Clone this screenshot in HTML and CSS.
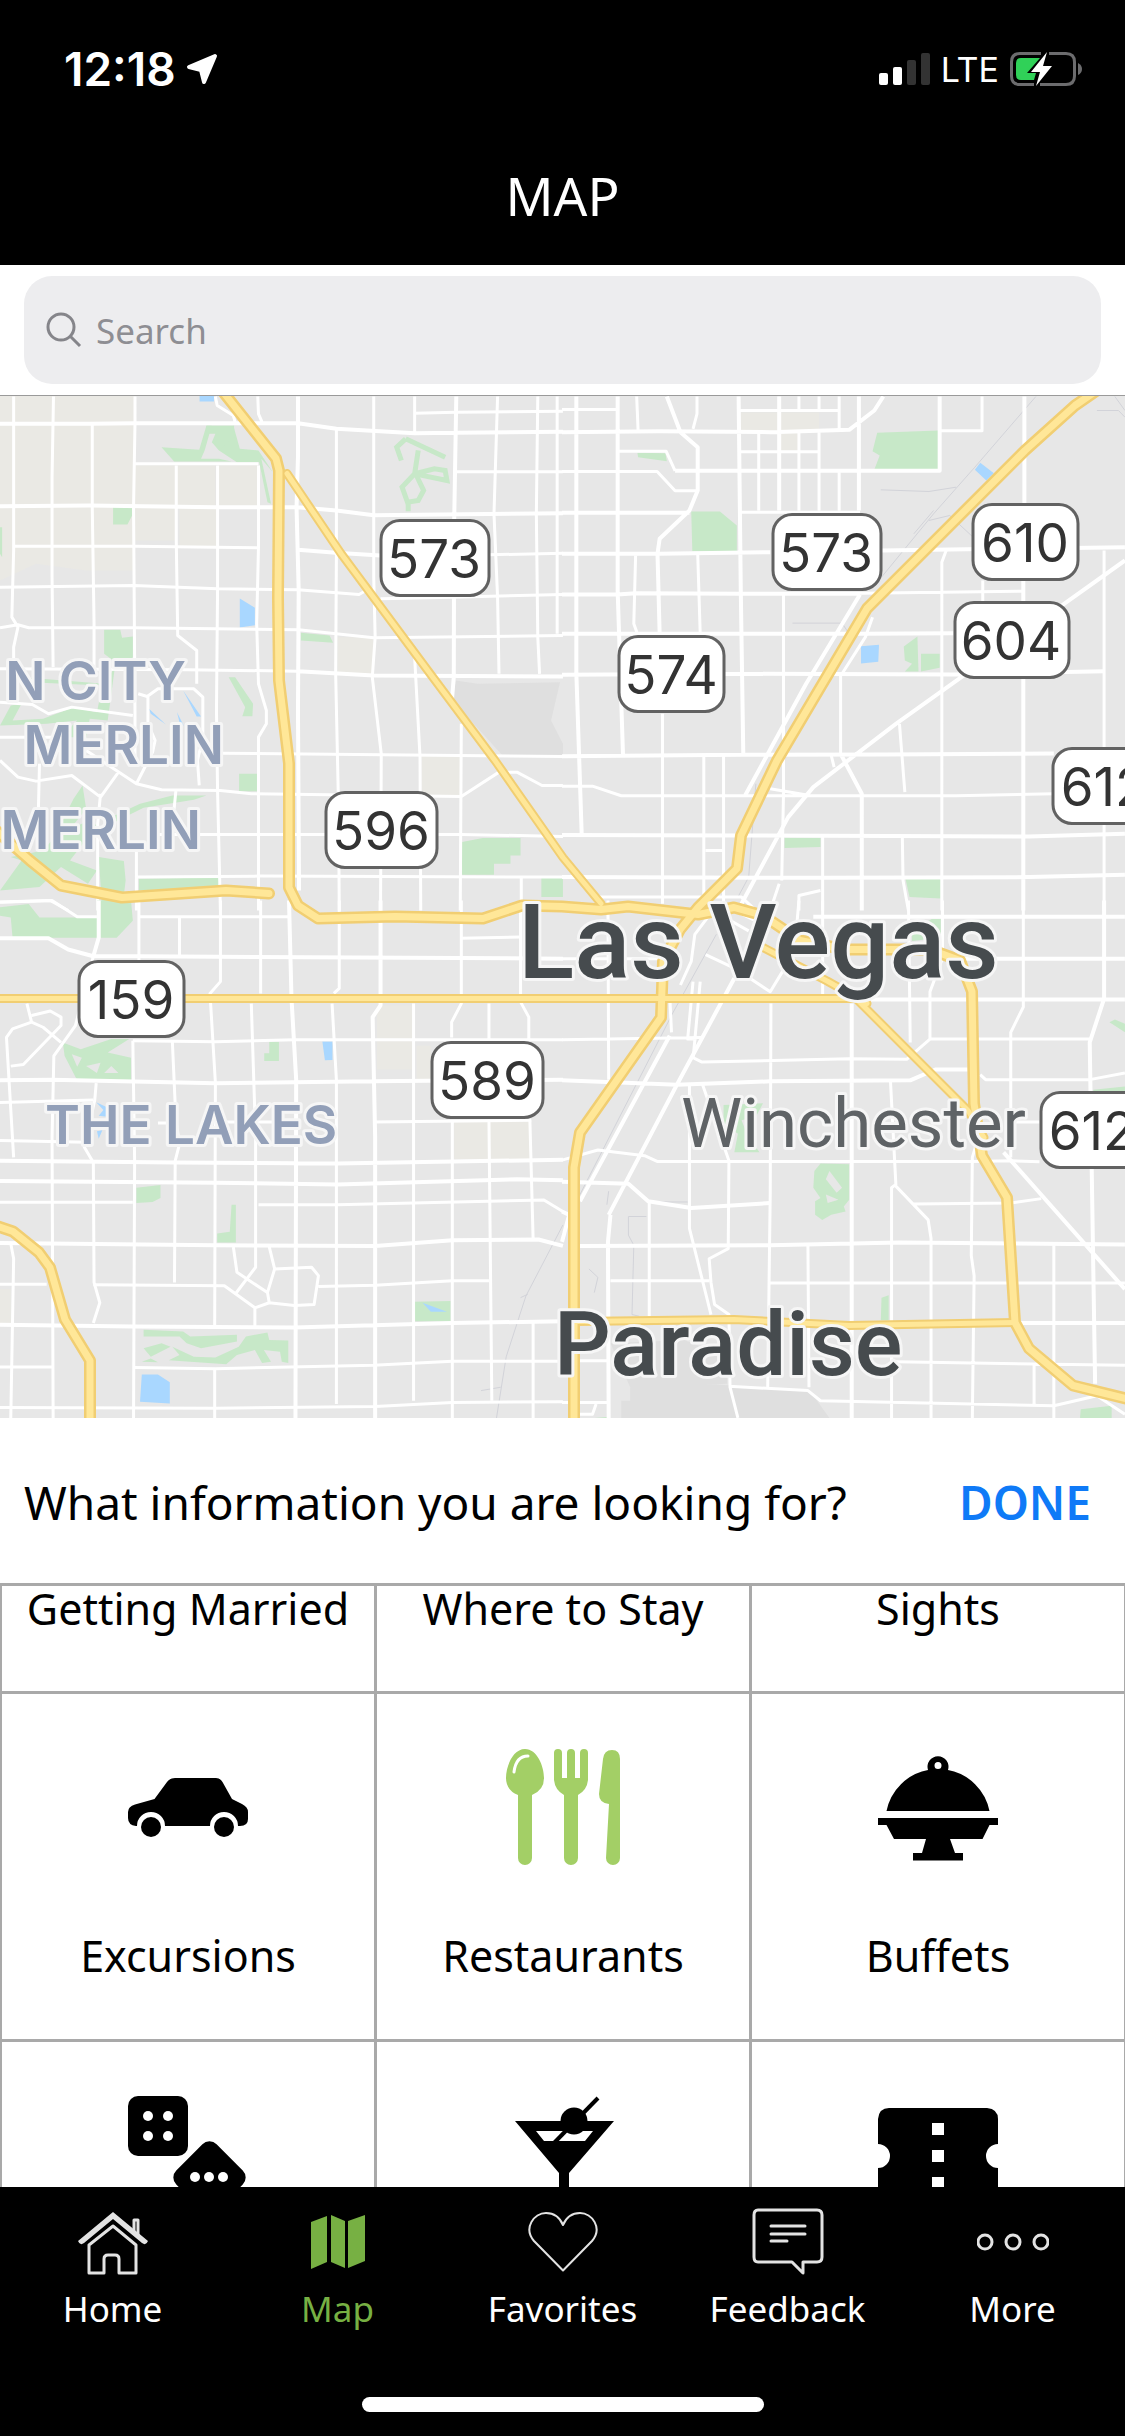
FILE: index.html
```html
<!DOCTYPE html>
<html lang="en">
<head>
    <meta charset="UTF-8">
    <meta name="viewport" content="width=device-width, initial-scale=1.0">
    <title>Map</title>
    <link rel="stylesheet" href="styles.css">
</head>
<body>
    <div class="app">
        <header class="header">
            <div class="status">
                <div class="status-group">
                    <span class="time">12:18</span>
                    <svg class="location" viewBox="0 0 32 32" aria-hidden="true">
                        <path d="M29 3L3 14 15 17 18 29Z"/>
                    </svg>
                </div>
                <div class="status-group status-right">
                    <svg class="signal" viewBox="0 0 52 34" aria-hidden="true">
                        <rect x="0" y="21" width="9" height="12" rx="2"/>
                        <rect x="14" y="15" width="9" height="18" rx="2"/>
                        <rect class="off" x="28" y="8" width="9" height="25" rx="2"/>
                        <rect class="off" x="42" y="1" width="9" height="32" rx="2"/>
                    </svg>
                    <span class="network">LTE</span>
                    <svg class="battery" viewBox="0 0 74 36" aria-hidden="true">
                        <path class="battery-shell" d="M32 2.500H11Q2.500 2.500 2.500 11V25Q2.500 33.500 11 33.500H25M40 2.500H57Q65.500 2.500 65.500 11V25Q65.500 33.500 57 33.500H31"/>
                        <path class="battery-nub" d="M69 12Q73 14 73 18Q73 22 69 24Z"/>
                        <path class="battery-level" d="M12 7H31L18 22H27L25 29H12Q7 29 7 24V12Q7 7 12 7Z"/>
                        <path class="battery-bolt" d="M38 1L22 21H31L27 35L43 15H34Z"/>
                    </svg>
                </div>
            </div>
            <h1>MAP</h1>
        </header>

        <div class="search-bar">
            <label class="search">
                <svg class="search-icon" viewBox="0 0 36 36" aria-hidden="true">
                    <circle cx="15" cy="15" r="13"/>
                    <path d="M24 24L34 34"/>
                </svg>
                <input type="search" placeholder="Search" aria-label="Search">
            </label>
        </div>

        <main class="map">
            <svg viewBox="0 0 1125 1023" preserveAspectRatio="xMidYMid slice">
                <!-- north west tile -->
                <g transform="matrix(.359 0 0 .3333 0 -5)">
                    <path class="sand" d="M0 0H376V540H240L100 520 0 570ZM376 225H600V350H376ZM376 350H490V450H376ZM606 225H720V350H606ZM940 740H1040V850H940ZM1175 1095H1285V1220H1175ZM500 350H606V470H500Z"/>
                    <path class="block" d="M1270 870L1330 880 1560 875 1535 990 1568 1060V1095H1400L1260 930Z"/>
                    <path class="park" d="M450 170L555 178 575 105H590L570 180 560 205H610L645 213H485ZM650 105L668 175 720 180 760 245 728 205 755 340 745 335 722 215H660L610 180ZM315 347H368V375L355 402H315ZM290 718H335L340 742 370 738V800L340 830 290 790ZM838 727L918 735 928 757 838 750ZM637 860H655L705 940 703 977H675L683 950ZM666 1150H716V1202H666ZM1287 1355L1345 1343H1450V1395H1422V1420H1376V1453H1287ZM1508 1460H1568V1520H1508ZM387 1465L560 1462H614V1490L387 1500ZM275 1400L345 1412 350 1470 340 1560H285ZM0 410H6V500L0 490ZM80 862L290 880 320 830 300 990 250 985 240 1040 170 1040 215 990 130 1000 0 1005 30 945 60 940 35 990 120 985 205 950 270 965 285 885 85 875ZM230 1185L240 1255 200 1310 170 1300 205 1225ZM290 1290L390 1240 480 1215H575L540 1228 400 1252 310 1300ZM160 1330L250 1290 270 1305 195 1410 270 1440 245 1480 170 1430 110 1490 0 1500 60 1410 30 1400 120 1380Z"/>
                    <path class="park-line" d="M1130 145L1105 170 1118 210M1130 145L1240 200M1165 180L1155 250 1245 270 1240 240 1210 235 1155 250 1120 290 1135 335 1165 330 1180 300 1160 255M1137 335V362"/>
                    <path class="park" d="M575 105H652V140L610 180 590 155 600 130H575Z"/>
                    <path class="water" d="M556 14H596V33H556ZM668 624L710 652V704L668 711ZM510 900L560 978H548ZM415 955L462 1002 420 970ZM493 965L512 1006 500 995Z"/>
                    <path class="road" d="M38 18V480L33 680 50 710 38 770V820M149 18L145 260V560L148 830M257 100V350L262 700V830M376 18V100L372 350 376 960V1100M491 225V450L495 735 548 780V880M606 225V600L603 960 606 1200 614 1560M720 225V470L715 700 720 880 742 960V1000L720 1040V1560M600 18L605 45 650 75 655 95M718 18L720 70 730 95M937 115V500L935 850 943 1250 945 1560M1041 18V560L1045 740 1037 860 1062 1090 1060 1560M1155 18V125M1155 800L1170 1100 1172 1560M1285 1000L1282 1560M1386 18L1376 370 1386 620 1390 850M1498 18L1494 370 1498 740 1503 850M1552 18V730"/>
                    <path class="road" d="M1155 68L1270 65 1568 62M376 220H720M1271 244H1568M38 467H376L720 472M1360 493L1568 488M0 590L372 585 606 595 830 598 1000 612 1020 600M1060 625L1260 620 1568 612M0 712L50 703 80 712H370L832 718 1041 742 1568 735M0 835L520 838 830 842M0 935L90 942 135 970 200 950 370 975M620 1088L1568 1098M0 1110L50 1160 100 1172 200 1155 280 1220 330 1145M240 1080L380 1180 450 1198 614 1200 700 1210 1285 1218 1390 1145H1440L1510 1185H1568M440 1332H1285L1568 1338M380 1460L720 1457 1568 1460M280 1210L272 1300V1560M380 1380V1560M385 910L410 918 440 895H540L565 920V1040L550 1110 555 1185M412 918V1000L432 1050 425 1085 380 1180M110 1120L107 1255M0 1040H150M490 1200L485 1255M0 1535L140 1530 190 1560M1452 1460V1560"/>
                    <path class="road major" d="M0 100H250L376 98H830L937 115 1155 128 1270 127 1568 124M830 18V200L826 350 832 600 830 960 833 1500M1271 18L1265 400 1264 860 1258 940M0 347L250 345 600 350H830L937 360 1041 374 1568 368M830 478L935 487 1060 495M830 842L1041 855 1568 858"/>
                </g>

                <!-- north east tile -->
                <g transform="matrix(.359 0 0 .3333 562 -5)">
                    <path class="sand" d="M498 66H716V120H498ZM610 125H660V180H610Z"/>
                    <path class="park" d="M878 127L1048 120V237H870L885 195 865 182ZM360 363H440L487 405V482H363ZM210 187L288 188 292 212 212 200ZM620 1342H720V1370L620 1373ZM957 1466H1055V1524L968 1520ZM952 768L990 738 993 843H955L975 820 955 810ZM1000 790H1052V832L1000 843Z"/>
                    <path class="water" d="M1165 217L1203 248 1182 270 1150 238ZM833 767L883 763 881 814 833 819Z"/>
                    <path class="rail" d="M1320 18L1150 230 1035 370 890 560M888 298L1022 303 1098 290M1022 390L1080 375 1145 440M642 698H780L800 730M1490 60H1550L1568 80M1035 360L980 430M1540 18L1568 60M540 1180L520 1460 490 1520"/>
                    <path class="road" d="M208 18L212 120M376 18V70L365 115M660 18V60M660 125V360M716 18V60M716 125V360M548 125V360M772 18V120M772 245V360M492 60H772M492 184H716M0 57H155M155 182H290L315 241M0 243H265L315 301H378M498 365H830M1170 18V121H1052M1070 480L1058 515V1560M830 608L1058 605 1285 602M1172 570V640M205 495L200 700 210 730M378 490L385 730M1510 480V1560M865 680L845 740 780 850M617 612V1210L612 1470M776 850V1090M940 1000L955 1205M280 970V1540M395 1095V1540M450 1095V1540M0 1187H85L165 1216H1100L1370 1210M400 1380H450M726 1340V1560M948 1340L950 1470 965 1560M750 1095L758 1130M90 1520H500L540 1560M660 1560V1515L720 1500M580 1195L690 1215M605 1480L580 1560"/>
                    <path class="road major" d="M40 18V850L55 1335M155 18V600L170 1095M292 18L330 125 378 170V300L355 360 272 445 266 490 272 730M492 18L498 600 505 1090M605 18V360M827 18V360M0 125L270 122 580 125 800 118 870 60 895 18M315 241H1052V18M0 367H355M0 490H270L580 485M890 480L1568 470M1288 18V340M1285 570V1560M0 612H155L205 608 500 610H830M0 730H840L1090 728M0 853L500 850 1090 852 1510 842M1568 510L930 1000 700 1190 630 1280 500 1540M830 612L680 880 510 1215M776 1090L835 1210V1560M0 1097L500 1093 900 1092 1370 1089M0 1334L500 1335 1300 1338 1568 1330M0 1460L720 1462 1300 1460 1568 1453"/>
                </g>

                <!-- south west tile -->
                <g transform="matrix(.359 0 0 .338 0 505)">
                    <path class="sand" d="M1050 310H1150V500H1050ZM1265 655H1476V765H1265ZM0 1150H30V1250H0ZM1160 430H1200V530H1160Z"/>
                    <path class="park" d="M0 20L80 10 110 50H270V0H365L370 60 325 110H35L30 50 0 45ZM175 420L225 440 310 410H360L300 450 365 465V532H215L180 460ZM750 418H777V475H736V452H750ZM380 850L447 842V880L425 892 380 895ZM645 900H657V1012H605V985L640 980ZM1150 1187L1255 1185V1245H1150ZM400 1270L510 1275 530 1290 660 1285V1305L560 1325 520 1310 500 1290H400ZM400 1325L450 1310 475 1320 420 1350ZM470 1360L500 1345 480 1320 540 1350 600 1352 665 1320 685 1290 745 1278 750 1300 803 1302 803 1368 785 1365 780 1335 735 1330 755 1365 730 1368 710 1330 660 1345 630 1372ZM395 1365L420 1355 440 1366Z"/>
                    <path class="land" d="M200 455L228 465 215 492ZM240 490L280 480 270 510ZM310 490L330 510H290Z"/>
                    <path class="water" d="M898 417H926V472L905 473ZM268 597L298 612V640L275 637 288 620ZM270 683L285 680 275 705ZM1177 1190L1245 1217H1200ZM395 1402H440L473 1425V1488L390 1483Z"/>
                    <path class="rail" d="M1568 960L1465 1170 1410 1350 1383 1531M1450 1175L1470 1165M1340 1450L1395 1440"/>
                    <path class="road" d="M387 0V180M500 48V170M614 0V240L585 275 600 540 598 1260M726 0V275M945 0V260L930 275M925 305L937 530V1490M1152 305V1480M1285 0V305L1258 360V405M1260 650V1531M1362 305V410M1362 650L1370 1480M1450 0V300L1473 345V415M1476 650L1485 1000M1485 1245V1531M700 305L712 700V1085L655 1165M480 415L490 650 500 720 488 770 486 1130M370 415L375 770 372 1531M260 165L210 370 150 460 145 700 148 1531M75 305L88 360 35 380 18 405 38 760M88 340L140 327 170 345V370L65 485 30 490M88 360L120 375 170 420M268 540L264 590 235 730 260 775 262 1130 278 1190 260 1250M30 1015L38 1060 30 1531M598 1385V1531"/>
                    <path class="road" d="M387 48H805M1285 112L1450 108M370 415L600 418 820 412H1568M0 598L260 590M0 710L240 715M440 658H490M600 655H820M1040 655L1480 650M0 893H370M720 900H940L1515 886 1568 920M0 1135H130M260 1137L625 1140 710 1205 750 1190 820 1198 875 1195 887 1110 868 1085 765 1090 745 1160 750 1190M750 1025L765 1090M650 1025L660 1100 745 1160M887 1142L1045 1138 1260 1125H1362M710 1205V1260M0 1380H148M375 1382L600 1385 1040 1375 1260 1363H1568M0 1500L600 1502 1045 1497 1260 1485 1568 1483M0 5L145 0 215 48H270"/>
                    <path class="road major" d="M275 0V110L260 165M805 0L812 290 825 530 823 1531M1060 0V310L1038 345 1045 700V1531M0 112H135L190 145 260 165H387L1568 172M0 532L145 530 600 541 1040 535 1568 530M0 770L490 775 940 778 1568 767M0 830L600 835 940 840 1440 825 1568 828M0 1013L600 1020 1045 1022 1260 1005 1500 1003 1568 1022M0 1255L370 1260 820 1263 1260 1250 1568 1245"/>
                </g>

                <!-- south east tile -->
                <g transform="matrix(.359 0 0 .338 562 505)">
                    <path class="block" d="M190 1400L400 1430 690 1450 745 1531H165V1480H190ZM135 1310L340 1300 460 1350V1430L190 1440Z"/>
                    <path class="park" d="M1030 55H1055V110L975 120V90ZM1525 360L1540 352 1568 365V390ZM1480 560L1568 550V565H1480ZM450 605L560 600 540 640 500 650 515 690 550 745H480L490 690 450 660ZM720 778L800 780V885L785 905 790 920 750 930 725 945 705 930V890L720 880 700 850 703 800ZM890 1175L910 1168V1242H888ZM1445 1505L1531 1495V1531H1443ZM90 1528H125V1531Z"/>
                    <path class="land" d="M745 800L780 850 765 865 735 825ZM735 870L770 885 740 895Z"/>
                    <path class="rail" d="M430 100L310 330 50 870 0 990M185 935H235M185 935V990L200 1020 195 1225 215 1230M130 860L125 900M75 1090L100 1115 90 1160M260 892H350"/>
                    <path class="road" d="M128 0L130 530M660 0L655 60M726 0V280M965 0L970 420M1060 0V170L1025 270V410M1285 0V315L1250 390V760M582 305L580 870 573 1440M465 770L463 1030 410 1060 415 1130 425 1195 465 1225 468 1440 490 1531M355 540V970L415 1225M390 540L465 770M243 890V1230M685 1020L688 1440M915 535L930 840 918 850V1531M930 845L1020 945 1028 1000V1531M1160 700L1143 760 1140 1050 1148 1110 1143 1531M1370 1020V1531M1315 1370V1490M0 172H280M0 412L390 405M1165 515L1180 530H1470L1568 510M1470 410H1025L960 470 800 468 390 478 365 465M0 768L100 738 230 755 265 772H1140L1250 770 1330 773M980 898L1250 895 1335 882M135 1125H410M580 1132H1568M930 1365L1568 1375M50 1362H130M465 1437L685 1450 720 1480 1370 1495 1490 1465 1568 1520M0 1485H130M95 1490L85 1520H50M300 280L305 390M365 240L350 410H375M385 240L365 470M420 30L370 100 360 180 330 250M400 160L480 200 580 270 620 200M1250 655H1330M480 30L540 60 530 100M470 60L520 90"/>
                    <path class="road major" d="M1510 0V290L1470 420 1475 760 1485 1430M807 305V1531M135 930L128 1010 130 1531M700 48H1568M1040 172H1568M0 532L320 545 580 535 970 532 1040 500H1130M850 293H1568M0 832L185 838 240 890 360 910 580 895M50 1022L580 1020 940 1012 1568 1018M1265 1250H1568M1230 745L1568 1150M480 230L320 545 130 930M300 400L50 890M0 920L20 930 0 1010"/>
                </g>

                <!-- highways: casing first, then fill -->
                <g class="casing">
                    <path class="thin" d="M287 78L341 158 433 282 495 365 563 462 601 508M0 603H856L968 715 984 742M763 552L828 586 867 608M576 926L734 924 849 930 1015 927"/>
                    <path d="M218-10L276 63 279 75 278 202 279 285 289 368V492L298 510 318 523 395 521 483 523 522 510 562 511 601 514 628 511 698 519 734 512 763 520 800 545 845 554H930L960 565 972 596 974 708 982 760 1007 802 1015 927 1029 953 1073 990 1130 1004"/>
                    <path d="M1104-10L1075 10 1025 55 867 213 777 365 741 440 737 473 698 512 680 534 663 566 661 622 580 737 574 772V1030M-5 434L30 465 61 490 122 502 226 495 269 498M-5 830L13 836 39 857 50 872 65 924 90 965V1030"/>
                </g>
                <g class="highway">
                    <path class="thin" d="M287 78L341 158 433 282 495 365 563 462 601 508M0 603H856L968 715 984 742M763 552L828 586 867 608M576 926L734 924 849 930 1015 927"/>
                    <path d="M218-10L276 63 279 75 278 202 279 285 289 368V492L298 510 318 523 395 521 483 523 522 510 562 511 601 514 628 511 698 519 734 512 763 520 800 545 845 554H930L960 565 972 596 974 708 982 760 1007 802 1015 927 1029 953 1073 990 1130 1004"/>
                    <path d="M1104-10L1075 10 1025 55 867 213 777 365 741 440 737 473 698 512 680 534 663 566 661 622 580 737 574 772V1030M-5 434L30 465 61 490 122 502 226 495 269 498M-5 830L13 836 39 857 50 872 65 924 90 965V1030"/>
                </g>

                <g class="district">
                    <text x="186" y="304" text-anchor="end">N CITY</text>
                    <text x="224" y="368" text-anchor="end">MERLIN</text>
                    <text x="201" y="453" text-anchor="end">MERLIN</text>
                    <text x="45" y="748">THE LAKES</text>
                </g>
                <text class="town" x="681" y="751">Winchester</text>
                <text class="city" x="518" y="582">Las Vegas</text>
                <text class="city paradise" x="554" y="979">Paradise</text>

                <g class="shield">
                    <rect x="381" y="125" width="108" height="75" rx="19"/><text x="434" y="182">573</text>
                    <rect x="773" y="119" width="108" height="75" rx="19"/><text x="826" y="176">573</text>
                    <rect x="973" y="109" width="105" height="75" rx="19"/><text x="1025" y="166">610</text>
                    <rect x="955" y="207" width="114" height="75" rx="19"/><text x="1011" y="264">604</text>
                    <rect x="619" y="241" width="105" height="75" rx="19"/><text x="671" y="298">574</text>
                    <rect x="326" y="397" width="111" height="75" rx="19"/><text x="381" y="454">596</text>
                    <rect x="1053" y="353" width="108" height="75" rx="19"/><text x="1104" y="410">612</text>
                    <rect x="79" y="566" width="105" height="75" rx="19"/><text x="131" y="623">159</text>
                    <rect x="432" y="647" width="111" height="75" rx="19"/><text x="487" y="704">589</text>
                    <rect x="1041" y="697" width="108" height="75" rx="19"/><text x="1092" y="754">612</text>
                </g>
            </svg>
        </main>

        <section class="panel">
            <div class="panel-head">
                <h2>What information you are looking for?</h2>
                <button class="done" type="button">DONE</button>
            </div>
            <div class="grid">
                <button class="cell cell-cut" type="button">Getting Married</button>
                <button class="cell cell-cut" type="button">Where to Stay</button>
                <button class="cell cell-cut" type="button">Sights</button>

                <button class="cell" type="button">
                    <svg viewBox="0 0 120 120" aria-hidden="true">
                        <path d="M7 56.500L26.500 51 39 34Q42 30 47 30H88Q92 30 94.500 34L104 51 114 56Q120 59 120 64V71Q120 78 112 78H110A14 14 0 0 0 82 78H37A14 14 0 0 0 9 78H8Q0 77 0 70V64Q0 58.500 7 56.500Z"/>
                        <circle cx="23" cy="79" r="10"/>
                        <circle cx="96" cy="79" r="10"/>
                    </svg>
                    Excursions
                </button>
                <button class="cell" type="button">
                    <svg class="selected" viewBox="0 0 120 120" aria-hidden="true">
                        <path d="M22 1C34 1 41 18 41 30Q41 42 29 47V110A7 7 0 0 1 15 110V47Q3 42 3 30C3 18 10 1 22 1Z"/>
                        <path d="M51 5A4 4 0 0 1 59 5V30H64V5A4 4 0 0 1 72 5V30H77V5A4 4 0 0 1 85 5V32Q84 42 75 47V110A7 7 0 0 1 61 110V47Q52 42 51 32Z"/>
                        <path d="M100 11Q101 2 109 2Q117 2 117 11V110A7 7 0 0 1 103 110L106 56Q96 55 96 46Z"/>
                        <path class="shine" d="M11 24Q13 8 25 8"/>
                    </svg>
                    Restaurants
                </button>
                <button class="cell" type="button">
                    <svg viewBox="0 0 120 120" aria-hidden="true">
                        <path fill-rule="evenodd" d="M8.500 63A52 52 0 0 1 50 22A10.500 10.500 0 1 1 70 22A52 52 0 0 1 111.500 63ZM60 14A3.500 3.500 0 1 0 60 21A3.500 3.500 0 1 0 60 14Z"/>
                        <path d="M0 70H120V77H111.500L104.500 91H72L77 105H85V112.500H35V105H44L48 91H16L8.500 77H0Z"/>
                    </svg>
                    Buffets
                </button>

                <button class="cell" type="button" aria-label="Casinos">
                    <svg viewBox="0 0 120 120" aria-hidden="true">
                        <rect width="60" height="60" rx="10"/>
                        <rect x="53" y="53" width="57" height="57" rx="10" transform="rotate(45 81.500 81.500)"/>
                        <g class="dots">
                            <circle cx="20" cy="20" r="5"/><circle cx="40" cy="20" r="5"/>
                            <circle cx="20" cy="40" r="5"/><circle cx="40" cy="40" r="5"/>
                            <circle cx="67" cy="81" r="5"/><circle cx="81" cy="81" r="5"/><circle cx="95" cy="81" r="5"/>
                        </g>
                    </svg>
                </button>
                <button class="cell" type="button" aria-label="Nightlife">
                    <svg viewBox="0 0 120 120" aria-hidden="true">
                        <path fill-rule="evenodd" d="M12 25H111L66 77V120H56V77ZM33 35L41 45H82L90 35Z"/>
                        <circle cx="71" cy="25" r="13.500"/>
                        <path class="stick" d="M95 2L50 48"/>
                    </svg>
                </button>
                <button class="cell" type="button" aria-label="Shows">
                    <svg viewBox="0 0 120 120" aria-hidden="true">
                        <path d="M11 12H109Q120 13 120 23V48A12 12 0 0 0 120 72V108H0V72A12 12 0 0 0 0 48V23Q1 12 11 12Z"/>
                        <path class="dots" d="M54 27H66V39H54ZM54 54H66V66H54ZM54 81H66V93H54Z"/>
                    </svg>
                </button>
            </div>
        </section>

        <nav class="tabs">
            <div class="tab-list">
                <a class="tab" href="#">
                    <svg viewBox="0 0 72 72" aria-hidden="true">
                        <path class="solid" d="M36 5L71 34Q69 39 65 36L36 12 7 36Q3 39 1 34Z"/>
                        <path class="line" d="M36 19L12 38V66H27V52Q27 48 31 48H38Q42 48 42 52V66H59V38ZM57 24V13H61V28"/>
                    </svg>
                    Home
                </a>
                <a class="tab active" href="#">
                    <svg viewBox="0 0 72 72" aria-hidden="true">
                        <path class="solid" d="M9 15L25 9V55L9 62ZM29 8L43 14V61L29 55ZM46 14L63 8V54L46 61Z"/>
                    </svg>
                    Map
                </a>
                <a class="tab" href="#">
                    <svg viewBox="0 0 72 72" aria-hidden="true">
                        <path class="line hair" d="M36 63.500L7 34C-4 21 7 6 19 6Q31 6 36 18Q41 6 53 6C65 6 76 21 65 34Z"/>
                    </svg>
                    Favorites
                </a>
                <a class="tab" href="#">
                    <svg viewBox="0 0 72 72" aria-hidden="true">
                        <path class="line" d="M6 3H65Q70 3 70 8V50Q70 55 65 55H51V66L40 55H6Q2 55 2 50V8Q2 3 6 3ZM19 19H53M19 27H53M19 34H35"/>
                    </svg>
                    Feedback
                </a>
                <a class="tab" href="#">
                    <svg viewBox="0 0 72 72" aria-hidden="true">
                        <g class="line"><circle cx="8" cy="35" r="7"/><circle cx="36" cy="35" r="7"/><circle cx="64" cy="35" r="7"/></g>
                    </svg>
                    More
                </a>
            </div>
            <div class="home-indicator"></div>
        </nav>
    </div>
</body>
</html>
```
FILE: styles.css
```css
* {
    box-sizing: border-box;
    margin: 0;
    padding: 0;
}
body {
    font-family: 'Noto Sans', 'Open Sans', sans-serif;
    background-color: #ffffff;
    color: #000000;
}
button, input {
    font: inherit;
    color: inherit;
    border: none;
    background: none;
}
svg {
    display: block;
    flex: none;
}
.app {
    display: flex;
    flex-direction: column;
    height: 100vh;
}

/* header */
.header {
    background-color: #000000;
    color: #ffffff;
    height: 265px;
}
.status {
    display: flex;
    justify-content: space-between;
    align-items: center;
    height: 138px;
    padding: 0 42px 0 64px;
    font-family: Inter, sans-serif;
}
.status-group {
    display: flex;
    align-items: center;
    gap: 10px;
}
.time {
    font-size: 46px;
    font-weight: 600;
}
.location {
    width: 32px;
    height: 32px;
    fill: #ffffff;
    stroke: #ffffff;
    stroke-width: 4;
    stroke-linejoin: round;
}
.signal {
    width: 52px;
    height: 34px;
    fill: #ffffff;
}
.signal .off {
    fill: #333333;
}
.network {
    font-size: 34px;
    font-weight: 400;
}
.battery {
    width: 74px;
    height: 36px;
}
.battery-shell {
    fill: none;
    stroke: #6c6c6e;
    stroke-width: 3;
}
.battery-nub {
    fill: #6c6c6e;
}
.battery-level {
    fill: #30d158;
}
.battery-bolt {
    fill: #ffffff;
}
.header h1 {
    font-size: 53px;
    font-weight: 400;
    line-height: 116px;
    text-align: center;
}

/* search */
.search-bar {
    padding: 11px 24px;
    border-bottom: 1px solid #9a9a9a;
}
.search {
    display: flex;
    align-items: center;
    gap: 14px;
    height: 108px;
    padding: 0 22px;
    border-radius: 28px;
    background-color: #ededef;
}
.search-icon {
    width: 36px;
    height: 36px;
    fill: none;
    stroke: #85858a;
    stroke-width: 3;
}
.search input {
    flex: 1;
    min-width: 0;
    font-size: 35px;
    outline: none;
    appearance: none;
}
.search input::placeholder {
    color: #8e8e93;
    opacity: 1;
}

/* map */
.map {
    flex: 1;
    min-height: 0;
    background-color: #e7e7e7;
    font-family: Inter, sans-serif;
}
.map svg {
    width: 100%;
    height: 100%;
}
.map path {
    vector-effect: non-scaling-stroke;
}
.sand { fill: #eae9e4; }
.block { fill: #dfdfdf; }
.land { fill: #e7e7e7; }
.park { fill: #c7e8c8; }
.park-line {
    fill: none;
    stroke: #c7e8c8;
    stroke-width: 5;
}
.water { fill: #a9d7ff; }
.rail {
    fill: none;
    stroke: #d2d3d9;
    stroke-width: 1;
}
.road {
    fill: none;
    stroke: #ffffff;
    stroke-width: 3;
    stroke-linejoin: round;
}
.road.major {
    stroke-width: 4;
}
.casing path, .highway path {
    fill: none;
    stroke-linejoin: round;
    stroke-linecap: round;
}
.casing path {
    stroke: #f1ce72;
    stroke-width: 12;
}
.casing .thin {
    stroke-width: 9;
}
.highway path {
    stroke: #ffe798;
    stroke-width: 7;
}
.highway .thin {
    stroke-width: 5;
}
.map text {
    paint-order: stroke;
    stroke: #f6f6f6;
    stroke-width: 6;
    stroke-linejoin: round;
}
.district {
    font-size: 53px;
    font-weight: 600;
    fill: #929fb8;
}
.map .town {
    font-family: Roboto, sans-serif;
    font-size: 69px;
    fill: #5f6366;
}
.map .city {
    font-family: Roboto, sans-serif;
    font-size: 104px;
    font-weight: 500;
    fill: #464b4e;
}
.map .paradise {
    font-size: 89px;
}
.map .shield text {
    font-size: 53px;
    text-anchor: middle;
    fill: #333333;
    stroke: none;
}
.shield rect {
    fill: #ffffff;
    stroke: #626262;
    stroke-width: 3;
}

/* category panel */
.panel-head {
    display: flex;
    justify-content: space-between;
    align-items: center;
    height: 165px;
    padding: 2px 34px 0 24px;
}
.panel-head h2 {
    font-size: 46px;
    font-weight: 400;
}
.done {
    font-size: 46px;
    font-weight: 600;
    color: #0f7af7;
}
.grid {
    display: grid;
    grid-template-columns: repeat(3, 1fr);
    grid-template-rows: 105px 345px 345px;
    gap: 3px;
    height: 604px;
    padding: 3px 1px 0 2px;
    background-color: #a9a9a9;
    overflow: hidden;
}
.cell {
    display: flex;
    flex-direction: column;
    align-items: center;
    gap: 58px;
    padding-top: 54px;
    background-color: #ffffff;
    font-size: 43px;
    line-height: 60px;
}
.cell-cut {
    padding-top: 0;
    line-height: 46px;
}
.cell svg {
    width: 120px;
    height: 120px;
}
.cell .selected {
    fill: #a3cf66;
}
.shine {
    fill: none;
    stroke: #ffffff;
    stroke-width: 3;
    stroke-linecap: round;
}
.dots {
    fill: #ffffff;
}
.stick {
    stroke: #000000;
    stroke-width: 4;
}

/* tab bar */
.tabs {
    height: 249px;
    padding-top: 20px;
    background-color: #000000;
}
.tab-list {
    display: grid;
    grid-template-columns: repeat(5, 1fr);
}
.tab {
    display: flex;
    flex-direction: column;
    align-items: center;
    gap: 5px;
    color: #ffffff;
    font-size: 35px;
    line-height: 50px;
    text-decoration: none;
}
.tab.active {
    color: #77b043;
}
.tab svg {
    width: 72px;
    height: 72px;
}
.tab .solid {
    fill: #e3e3e3;
}
.tab.active .solid {
    fill: #77b043;
}
.tab .line {
    fill: none;
    stroke: #e3e3e3;
    stroke-width: 3;
    stroke-linejoin: round;
    stroke-linecap: round;
}
.tab .hair {
    stroke-width: 2;
}
.home-indicator {
    width: 402px;
    height: 15px;
    margin: 63px auto 0;
    border-radius: 8px;
    background-color: #ffffff;
}
```
